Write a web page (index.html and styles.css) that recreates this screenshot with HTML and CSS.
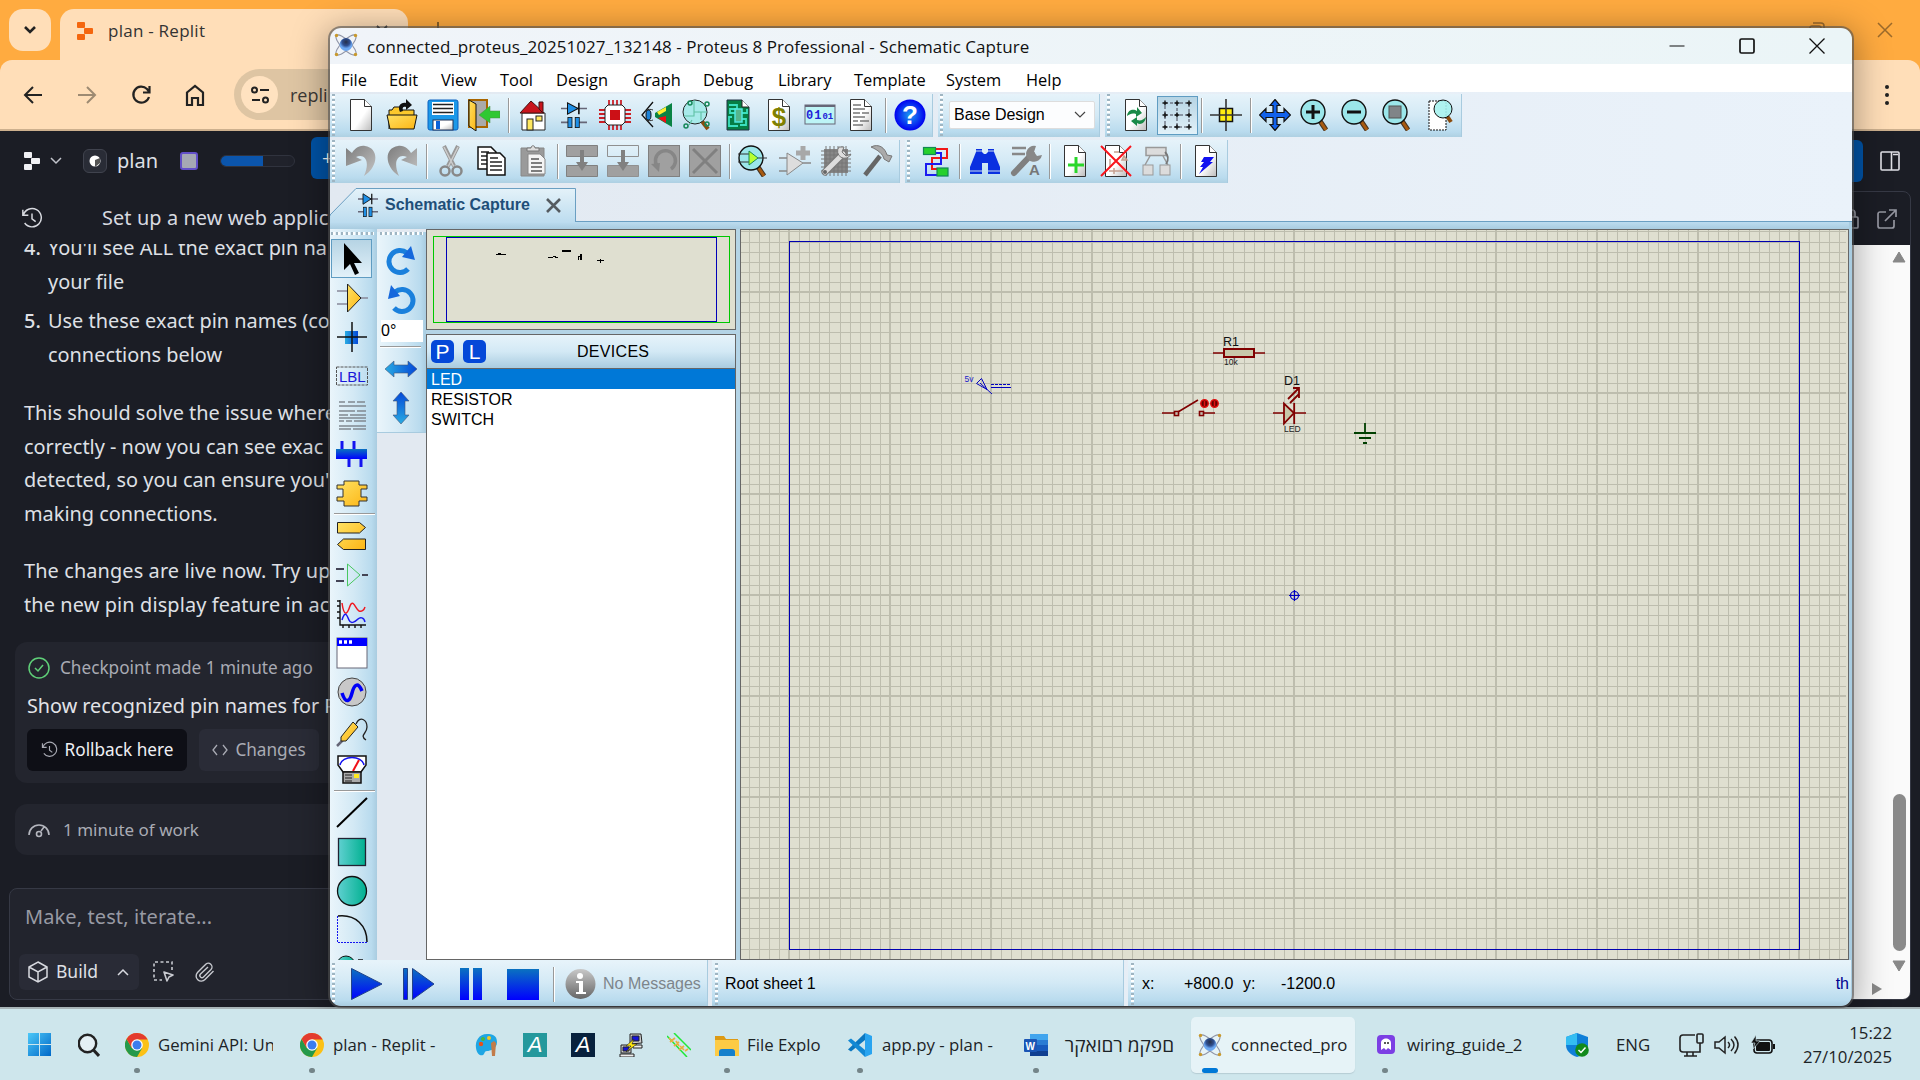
FILE: index.html
```html
<!DOCTYPE html>
<html lang="en">
<head>
<meta charset="utf-8">
<title>Schematic Capture</title>
<link rel="stylesheet" href="styles.css">
</head>
<body>
<svg class="defs" aria-hidden="true">
  <defs>
    <linearGradient id="gBlueV" x1="0" y1="0" x2="0" y2="1"><stop offset="0" stop-color="#0a72c0"/><stop offset="1" stop-color="#00f"/></linearGradient>
    <linearGradient id="gBlueH"><stop offset="0" stop-color="#29abe2"/><stop offset="1" stop-color="#0448d8"/></linearGradient>
    <linearGradient id="gTeal"><stop offset="0" stop-color="#5fd0d0"/><stop offset="1" stop-color="#00b090"/></linearGradient>
    <linearGradient id="gGold" x1="0" y1="0" x2="1" y2="1"><stop offset="0" stop-color="#ffe263"/><stop offset="1" stop-color="#fcb514"/></linearGradient>
    <linearGradient id="gGrey" x1="0" y1="0" x2="1" y2="1"><stop offset="0" stop-color="#7c7c7c"/><stop offset="1" stop-color="#c4c4c4"/></linearGradient>
    <linearGradient id="gPage" x1="0" y1="0" x2="1" y2="1"><stop offset=".55" stop-color="#fff"/><stop offset="1" stop-color="#bbb"/></linearGradient>
    <linearGradient id="gInfo" x1="0" y1="0" x2="0" y2="1"><stop offset="0" stop-color="#c8c8c8"/><stop offset="1" stop-color="#666"/></linearGradient>
    <radialGradient id="gHelp"><stop offset="0" stop-color="#1c9cf0"/><stop offset="1" stop-color="#0000f0"/></radialGradient>
    <linearGradient id="gWin" x1="0" y1="0" x2="1" y2="1"><stop offset="0" stop-color="#4cc8f8"/><stop offset="1" stop-color="#0068c8"/></linearGradient>
    <radialGradient id="gBall" cx=".5" cy=".3"><stop offset="0" stop-color="#26304a"/><stop offset=".6" stop-color="#2f4f90"/><stop offset="1" stop-color="#6ba6f0"/></radialGradient>
    <symbol id="page" viewBox="0 0 32 32"><path d="M5.500 .5h14l7 7v24h-21z" fill="url(#gPage)" stroke="#333"/><path d="M19.500 .5v7h7" fill="#fff" stroke="#333"/></symbol>
    <symbol id="lens" viewBox="0 0 32 32"><path d="M20 22l6 9" stroke="#432" stroke-width="5"/><path d="M20 22l6 9" stroke="#a85a10" stroke-width="3"/><circle cx="13" cy="13" r="12" fill="#9be6ea" stroke="#111" stroke-width="1.400"/></symbol>
    <symbol id="parts" viewBox="0 0 32 32"><path d="M0 8h32M0 25h11M21 25h11" stroke="#667" stroke-width="2"/><path d="M8 1v14l13-7z" fill="#1e8fe6" stroke="#111" stroke-width="1.300"/><path d="M22 1v14" stroke="#111" stroke-width="2"/><rect x="8.500" y="19" width="5" height="12.500" fill="#1e8fe6" stroke="#111"/><rect x="17.500" y="19" width="5" height="12.500" fill="#1e8fe6" stroke="#111"/></symbol>
    <symbol id="atom" viewBox="0 0 24 24"><g fill="none" stroke="#8f94a6" stroke-width="1.100"><ellipse cx="12" cy="12" rx="13.500" ry="4.500" transform="rotate(45 12 12)"/><ellipse cx="12" cy="12" rx="13.500" ry="4.500" transform="rotate(-45 12 12)"/></g><circle cx="12" cy="11.500" r="6.400" fill="url(#gBall)"/><g fill="#c9992c"><circle cx="2.500" cy="2.500" r="1.700"/><circle cx="21.500" cy="2.500" r="1.700"/><circle cx="2.500" cy="21.500" r="1.700"/><circle cx="21.500" cy="21.500" r="1.700"/></g></symbol>
    <symbol id="chrome" viewBox="0 0 24 24"><circle cx="12" cy="12" r="12" fill="#fbc116"/><path d="M12 24l5.200-9H6.800L1.600 6A12 12 0 0 0 12 24" fill="#24994a"/><path d="M12 6.500h10.600A12 12 0 0 0 1.600 6l5.200 9z" fill="#e33b2e"/><circle cx="12" cy="12" r="5.800" fill="#fff"/><circle cx="12" cy="12" r="4.500" fill="#3b7ded"/></symbol>
    <symbol id="doc" viewBox="0 0 32 32"><path d="M1 1h13l5 5v17H1z" fill="#fff" stroke="#111" stroke-width="1.500"/><path d="M4 6h8M4 10h12M4 14h12M4 18h12" stroke="#222" stroke-width="1.700"/></symbol>
    <symbol id="history" viewBox="0 0 24 24"><path d="M2 3v6h6M2.500 9A10 10 0 1 1 4 17.500M12 7v6l4 3" fill="none" stroke="currentColor" stroke-width="1.600"/></symbol>
    <linearGradient id="tabFill" x1="0" y1="0" x2="0" y2="1"><stop offset="0" stop-color="#e4f2f9"/><stop offset="1" stop-color="#bcdcef"/></linearGradient>
  </defs>
</svg>

<div class="desktop">

  <!-- Browser window -->
  <section class="browser">
    <div class="tabstrip">
      <div class="tabsearch"><svg width="14" height="10"><path d="M2 2l5 5 5-5" fill="none" stroke="#222" stroke-width="2.600"/></svg></div>
      <div class="tab">
        <svg width="16" height="20" viewBox="0 0 16 20"><g fill="#f4660e"><rect x="0" y="1" width="8" height="6" rx="1"/><rect x="7" y="7" width="9" height="6" rx="1"/><rect x="0" y="13" width="8" height="6" rx="1"/></g></svg>
        <span class="tabtitle">plan - Replit</span>
        <svg class="tabclose" width="12" height="12"><path d="M1 1l10 10M11 1L1 11" stroke="#222" stroke-width="1.800"/></svg>
      </div>
      <svg class="plus" width="14" height="14"><path d="M7 0v14M0 7h14" stroke="#8a6128" stroke-width="2"/></svg>
      <div class="sysbuttons">
        <svg width="16" height="16" fill="none" stroke="#9b6a2b" stroke-width="1.500"><rect x="1" y="4" width="11" height="11" rx="2"/><path d="M4 1h8a3 3 0 0 1 3 3v8"/></svg>
        <svg width="16" height="16"><path d="M1 1l14 14M15 1L1 15" stroke="#9b6a2b" stroke-width="1.500"/></svg>
      </div>
    </div>
    <div class="navbar">
      <svg width="20" height="20" viewBox="0 0 20 20" fill="none" stroke="#222" stroke-width="2"><path d="M19 10H2M10 2l-8 8 8 8"/></svg>
      <svg width="20" height="20" viewBox="0 0 20 20" fill="none" stroke="#9d8a72" stroke-width="2"><path d="M1 10h17M10 2l8 8-8 8"/></svg>
      <svg width="20" height="20" viewBox="0 0 20 20" fill="none" stroke="#222" stroke-width="2.200"><path d="M18 12a8 8 0 1 1-2-8l2 2.500M18.500 1v6.500H12"/></svg>
      <svg width="20" height="22" viewBox="0 0 20 22" fill="none" stroke="#222" stroke-width="2.200"><path d="M2 8.500L10 2l8 6.500V21h-5v-7H7v7H2z"/></svg>
      <div class="omnibox">
        <div class="site"><svg width="18" height="18" viewBox="0 0 18 18" fill="none" stroke="#222" stroke-width="2"><circle cx="3.500" cy="4" r="2.500"/><path d="M9 4h9M1 14h8"/><circle cx="14.500" cy="14" r="2.500"/></svg></div>
        <span>repli</span>
      </div>
      <div class="dots"><i></i><i></i><i></i></div>
    </div>
    <div class="page">
      <div class="chat">
        <div class="apphead">
          <svg width="16" height="18" viewBox="0 0 16 18" fill="#f0f0f4"><rect width="8" height="6" rx="1"/><rect x="7" y="6" width="9" height="6" rx="1"/><rect y="12" width="8" height="6" rx="1"/></svg>
          <svg class="chev" width="12" height="8"><path d="M1 1l5 5 5-5" fill="none" stroke="#c2c4cc" stroke-width="1.500"/></svg>
          <span class="appbox"><svg width="12" height="12"><circle cx="6" cy="6" r="5.500" fill="#fff"/><path d="M6 5l5-2v5l-5 4z" fill="#555"/></svg></span>
          <span class="appname">plan</span>
          <span class="purple"></span>
          <span class="progress"><i></i></span>
          <span class="newbtn">+</span>
        </div>
        <div class="thread"><svg width="22" height="22"><use href="#history"/></svg><span>Set up a new web applic</span></div>
        <div class="msgs">
          <div class="li first"><b>4.</b><span>You'll see ALL the exact pin na</span></div>
          <div class="li"><b></b><span>your file</span></div>
          <div class="li gap"><b>5.</b><span>Use these exact pin names (co</span></div>
          <div class="li"><b></b><span>connections below</span></div>
          <p>This should solve the issue where<br>correctly - now you can see exac<br>detected, so you can ensure you'<br>making connections.</p>
          <p>The changes are live now. Try up<br>the new pin display feature in act</p>
        </div>
        <div class="card">
          <div class="ck"><svg width="22" height="22" fill="none" stroke="#5fcf78" stroke-width="1.500"><circle cx="11" cy="11" r="10"/><path d="M7 11l3 3 5-6"/></svg><span>Checkpoint made 1 minute ago</span></div>
          <div class="show">Show recognized pin names for P</div>
          <div class="btns">
            <span class="btn dark"><svg width="17" height="17"><use href="#history"/></svg>Rollback here</span>
            <span class="btn"><svg width="16" height="12" fill="none" stroke="currentColor" stroke-width="1.300"><path d="M5 1L1 6l4 5M11 1l4 5-4 5"/></svg>Changes</span>
          </div>
        </div>
        <div class="work"><svg width="22" height="16" fill="none" stroke="#b4b6be" stroke-width="1.600"><path d="M1 13A10 10 0 0 1 21 13M13 9l3-4"/><circle cx="11" cy="12" r="2.500"/></svg><span>1 minute of work</span></div>
        <div class="prompt">
          <div class="ph">Make, test, iterate...</div>
          <div class="tools">
            <span class="build"><svg width="20" height="22" viewBox="0 0 20 22" fill="none" stroke="#d8dae0" stroke-width="1.500"><path d="M10 1l9 5v10l-9 5-9-5V6zM1 6l9 5 9-5M10 11v10"/></svg><span>Build</span><svg width="12" height="8"><path d="M1 7l5-5 5 5" fill="none" stroke="#d8dae0" stroke-width="1.500"/></svg></span>
            <svg width="21" height="21" fill="none" stroke="#c8cad0" stroke-width="1.600"><path d="M19 9V1H1v18h8" stroke-dasharray="3 2.500"/><path d="M11 11l9 3-4 2-2 4z" stroke-linejoin="round"/></svg>
            <svg class="clip" width="20" height="20" viewBox="0 0 20 20" fill="none" stroke="#c8cad0" stroke-width="1.400"><path d="M18.500 9l-8.500 8.500a5 5 0 0 1-7.500-7L10.500 2.500a3.600 3.600 0 0 1 5.500 5L8.500 15a2 2 0 0 1-3-3L13 5"/></svg>
          </div>
        </div>
      </div>
      <div class="preview">
        <div class="pvtop"><span class="bluebtn"></span><svg width="20" height="20" fill="none" stroke="#e0e0e6" stroke-width="1.600"><rect x="1" y="1" width="18" height="18" rx="1"/><path d="M11.500 1v18M13 3.500h5"/></svg></div>
        <div class="frame">
          <div class="fhead">
            <svg width="20" height="20" fill="none" stroke="#9496a0" stroke-width="1.700"><rect x="4" y="8" width="15" height="11" rx="1"/><path d="M10 8V4a3 3 0 0 1 6 0v4"/></svg>
            <svg width="20" height="20" fill="none" stroke="#9496a0" stroke-width="1.700"><path d="M9 3H3a2 2 0 0 0-2 2v12a2 2 0 0 0 2 2h12a2 2 0 0 0 2-2v-6M12 1h7v7M19 1L8 12"/></svg>
          </div>
          <div class="fbody">
            <div class="vscroll"><svg width="16" height="12"><path d="M8 1l6 10H2z" fill="#888" stroke="#888" stroke-linejoin="round"/></svg><i></i><svg width="16" height="12"><path d="M8 11l6-10H2z" fill="#888" stroke="#888" stroke-linejoin="round"/></svg></div>
            <div class="hscroll"><svg width="12" height="14"><path d="M1 1l10 6-10 6z" fill="#888"/></svg></div>
          </div>
        </div>
      </div>
    </div>
  </section>

  <!-- Proteus window -->
  <section class="proteus">
    <header class="title">
      <svg width="24" height="24"><use href="#atom"/></svg>
      <span>connected_proteus_20251027_132148 - Proteus 8 Professional - Schematic Capture</span>
      <div class="wbtns">
        <svg width="16" height="16"><path d="M.5 8h15" stroke="#111" stroke-width="1.200"/></svg>
        <svg width="16" height="16"><rect x="1" y="1" width="14" height="14" rx="1.500" fill="none" stroke="#111" stroke-width="1.700"/></svg>
        <svg width="16" height="16"><path d="M.5 .5l15 15M15.500 .5l-15 15" stroke="#111" stroke-width="1.300"/></svg>
      </div>
    </header>
    <nav class="menu"><span>File</span><span>Edit</span><span>View</span><span>Tool</span><span>Design</span><span>Graph</span><span>Debug</span><span>Library</span><span>Template</span><span>System</span><span>Help</span></nav>

    <div class="toolrow">
      <div class="bar">
        <i class="grip"></i>
        <span class="c"><svg><use href="#page"/></svg></span>
        <span class="c"><svg viewBox="0 0 32 32"><path d="M3 30V11h3l2-3h7l1 3h12v5" fill="#fcc92c" stroke="#111"/><path d="M1 16h30l-3 14H4z" fill="url(#gGold)" stroke="#111"/><path d="M14 13c-3-6 1-10 6-9V0l6 6-6 5V8c-3-1-4 1-3 4z" fill="#111"/></svg></span>
        <span class="c"><svg viewBox="0 0 32 32"><rect x="1" y="1" width="30" height="30" rx="2" fill="#1b98e8" stroke="#0a60c0"/><rect x="5" y="3" width="22" height="13" fill="#fff"/><path d="M6 5.500h20M6 9.500h20M6 13.500h20" stroke="#222" stroke-width="1.500"/><rect x="6" y="21" width="20" height="10" fill="url(#gPage)" stroke="#235"/><rect x="9" y="22" width="4" height="8" fill="#0b62d8"/></svg></span>
        <span class="c"><svg viewBox="0 0 32 32"><path d="M1 1h18v27H1z" fill="#aaa" stroke="#a86500" stroke-width="2"/><path d="M1 1l7 4v27l-7-5z" fill="url(#gGold)" stroke="#111"/><path d="M11 16l11-9v5h10v7H22v5z" fill="#2fc832" stroke="#4a8a40" stroke-width=".5"/></svg></span>
        <i class="sep"></i>
        <span class="c"><svg viewBox="0 0 32 32"><path d="M5 14h23v17H5z" fill="#fff" stroke="#222"/><path d="M3 14L14 2l13 12z" fill="#c8141c" stroke="#411"/><path d="M22 3h4v11l-4-4z" fill="#c8141c" stroke="#411"/><rect x="10" y="20" width="6" height="11" fill="#ffe860" stroke="#222"/><rect x="19" y="17" width="6" height="5" fill="#ffe860" stroke="#222"/></svg></span>
        <span class="c"><svg viewBox="0 0 32 32"><use href="#parts" x="3" width="26" height="32" /></svg></span>
        <span class="c"><svg viewBox="0 0 32 32"><path d="M10 1v30M14 1v30M18 1v30M22 1v30M0 11h32M0 15h32M0 19h32M0 23h32" stroke="#cc2026" stroke-width="1.800"/><path d="M9 6h14l3 3v14l-3 3H9l-3-3V9z" fill="#fff" stroke="#222"/><rect x="11" y="11" width="10" height="10" fill="#cc1016"/></svg></span>
        <span class="c"><svg viewBox="0 0 32 32"><path d="M13 3L2 16l11 12" fill="none" stroke="#111" stroke-width="1.300"/><path d="M5 12c3-2 6-2 8-1M5 20c3 2 6 2 8 1" fill="none" stroke="#333"/><ellipse cx="8.500" cy="16" rx="2.500" ry="5" fill="#1c82d8" stroke="#111"/><path d="M32 4v24L15 18v-4z" fill="#0a8344"/><path d="M17 13l9-5v4l-7 4z" fill="#ffee30"/><path d="M18 19l8-2v7z" fill="#f00c14"/></svg></span>
        <span class="c"><svg viewBox="0 0 32 32"><path d="M20 21l7 9" stroke="#8a4b0c" stroke-width="4"/><circle cx="14" cy="13" r="12" fill="#a8eaea" stroke="#222"/><path d="M13 1v12h13M3 17h10v-4M20 13v8M8 26l3-5" fill="none" stroke="#5fc0a4" stroke-width="1.100"/><g fill="none" stroke="#168858" stroke-width="1.500"><circle cx="9" cy="4" r="2"/><circle cx="26" cy="5" r="2"/><circle cx="26" cy="25" r="2"/><circle cx="5" cy="27" r="2"/></g></svg></span>
        <span class="c"><svg viewBox="0 0 32 32"><path d="M5 1h15l7 7v23H5z" fill="#067e44" stroke="#234"/><path d="M20 1v7h7" fill="#fff" stroke="#222"/><path d="M7 6h8v4H8v4h5M20 14h5v-4M10 18H7v9h9M19 20h5v6h-6" fill="none" stroke="#3ce0c0" stroke-width="1.800"/><rect x="13" y="10" width="7" height="13" fill="#56b58c" stroke="#50e8e0" stroke-width="1.500"/></svg></span>
        <span class="c"><svg viewBox="0 0 32 32"><use href="#page"/><text x="16" y="27" class="dollar">$</text></svg></span>
        <span class="c"><svg viewBox="0 0 32 32"><rect x="1" y="6" width="30" height="19" fill="#bdf4f6" stroke="#667"/><path d="M1 7h30" stroke="#667" stroke-width="2"/><text x="2" y="20" class="bin">01<tspan class="small">01</tspan></text></svg></span>
        <span class="c"><svg viewBox="0 0 32 32"><use href="#page"/><path d="M8 6h8M8 10h12M8 14h7M17 14h7M8 18h12M8 22h5M15 22h9M8 26h10" stroke="#777" stroke-width="1.300"/></svg></span>
        <i class="sep"></i>
        <span class="c"><svg viewBox="0 0 32 32"><circle cx="16" cy="16" r="15.500" fill="url(#gHelp)"/><text x="16" y="25" class="q">?</text></svg></span>
      </div>
      <div class="bar">
        <i class="grip"></i>
        <div class="combo"><span>Base Design</span><svg width="12" height="8"><path d="M1 1l5 5 5-5" fill="none" stroke="#444" stroke-width="1.200"/></svg></div>
      </div>
      <div class="bar">
        <i class="grip"></i>
        <span class="c"><svg viewBox="0 0 32 32"><use href="#page"/><path d="M7 17c1-7 7-7 10-5V8l5 6-6 4v-3c-4-1-6 0-9 2zM26 18c-1 7-6 8-9 6v3l-6-5 6-4v3c4 1 6 0 9-3z" fill="#1a8a48"/></svg></span>
        <span class="c on"><svg viewBox="0 0 32 32"><path d="M4 4h24v24H4zM16 4v24M4 16h24" fill="none" stroke="#445" stroke-width="1" stroke-dasharray="3 2"/><path d="M1.500 4h5M4 1.500v5M13.500 4h5M16 1.500v5M25.500 4h5M28 1.500v5M1.500 16h5M4 13.500v5M13.500 16h5M16 13.500v5M25.500 16h5M28 13.500v5M1.500 28h5M4 25.500v5M13.500 28h5M16 25.500v5M25.500 28h5M28 25.500v5" stroke="#111" stroke-width="1.400"/></svg></span>
        <i class="sep"></i>
        <span class="c"><svg viewBox="0 0 32 32"><rect x="9.500" y="9.500" width="13" height="13" fill="#ffee10" stroke="#111" stroke-width="1.500"/><path d="M16 0v32M0 16h32" stroke="#333" stroke-width="1.600"/></svg></span>
        <i class="sep"></i>
        <span class="c"><svg viewBox="0 0 32 32"><path d="M16 .5l5 6h-3v7h7v-4l6.500 6.500-6.500 6.500v-4h-7v7h3l-5 6-5-6h3v-7H7v4L.5 16 7 9.500v4h7v-7h-3z" fill="#1262ec" stroke="#111" stroke-width="1.200"/></svg></span>
        <span class="c"><svg viewBox="0 0 32 32"><use href="#lens"/><path d="M13 6v14M6 13h14" stroke="#111" stroke-width="3"/></svg></span>
        <span class="c"><svg viewBox="0 0 32 32"><use href="#lens"/><path d="M6 13h14" stroke="#111" stroke-width="3"/></svg></span>
        <span class="c"><svg viewBox="0 0 32 32"><use href="#lens"/><rect x="7" y="7" width="12" height="12" fill="#808488" stroke="#555"/></svg></span>
        <span class="c"><svg viewBox="0 0 32 32"><rect x="6" y="2" width="17" height="29" fill="#fff" stroke="#111" stroke-dasharray="2 1"/><path d="M24 17l4 6" stroke="#8a4b0c" stroke-width="4"/><circle cx="20" cy="10" r="9" fill="#a6f2ee" fill-opacity=".9" stroke="#111"/></svg></span>
      </div>
    </div>

    <div class="toolrow">
      <div class="bar">
        <i class="grip"></i>
        <span class="c"><svg viewBox="0 0 32 32"><path d="M1 3v18l16-6-6-3c8-4 15 3 8 19 15-10 15-28 1-30-7-1-11 4-13 7z" fill="url(#gGrey)"/></svg></span>
        <span class="c"><svg viewBox="0 0 32 32"><path d="M31 3v18l-16-6 6-3c-8-4-15 3-8 19C-2 21-2 3 12 1c7-1 11 4 13 7z" fill="url(#gGrey)"/></svg></span>
        <i class="sep"></i>
        <span class="c"><svg viewBox="0 0 32 32"><path d="M9 1l10 20M23 1L13 21" stroke="#999" stroke-width="4"/><path d="M9 2l10 20M23 2L13 22" stroke="#ccc" stroke-width="1.500"/><g fill="none" stroke="#888" stroke-width="2.500"><circle cx="10" cy="26" r="4.500"/><circle cx="22" cy="26" r="4.500"/></g></svg></span>
        <span class="c"><svg viewBox="0 0 32 32"><use href="#doc" x="1" y="1"/><use href="#doc" x="10" y="7"/></svg></span>
        <span class="c"><svg viewBox="0 0 32 32"><path d="M4 3h23v28H4z" fill="#9a9a9a" stroke="#888"/><path d="M10 6V3h4c0-3 4-3 4 0h4v3z" fill="#ddd" stroke="#777"/><path d="M11 9h12l5 5v15H11z" fill="#f4f4f4" stroke="#888"/><path d="M14 14h8M14 18h11M14 22h11M14 26h11" stroke="#555" stroke-width="1.500"/></svg></span>
        <i class="sep"></i>
        <span class="c"><svg viewBox="0 0 32 32"><g fill="#a0a0a0" stroke="#808080"><path d="M.5 .5h31v11H.5zM.5 20.500h31v11H.5z"/></g><path d="M16 5v15" stroke="#808080" stroke-width="4"/><path d="M10 17h12l-6 9z" fill="#808080"/></svg></span>
        <span class="c"><svg viewBox="0 0 32 32"><g stroke="#909090"><path d="M.5 .5h31v11H.5z" fill="none"/><path d="M.5 20.500h31v11H.5z" fill="#a0a0a0"/></g><path d="M16 5v15" stroke="#808080" stroke-width="4"/><path d="M10 17h12l-6 9z" fill="#808080"/></svg></span>
        <span class="c"><svg viewBox="0 0 32 32"><rect x=".5" y=".5" width="31" height="31" fill="#a0a0a0" stroke="#808080"/><path d="M9 21a10 10 0 1 1 14 3" fill="none" stroke="#868686" stroke-width="3.500"/><path d="M3 19l9-1-1 9z" fill="#868686"/></svg></span>
        <span class="c"><svg viewBox="0 0 32 32"><rect x=".5" y=".5" width="31" height="31" fill="#a0a0a0" stroke="#808080"/><path d="M4 4l24 24M28 4L4 28" stroke="#808080" stroke-width="3"/></svg></span>
        <i class="sep"></i>
        <span class="c"><svg viewBox="0 0 32 32"><use href="#lens"/><path d="M0 9h11M0 17h11M20 13h9" stroke="#333" stroke-width="1.200"/><path d="M11 6v14l9-7z" fill="#b8ff30" stroke="#1b8a50"/></svg></span>
        <span class="c"><svg viewBox="0 0 32 32"><path d="M0 13h8M0 26h8M24 18h8" stroke="#888" stroke-width="1.500"/><path d="M8 8v22l16-12z" fill="#ddd" stroke="#888"/><path d="M24 1v14M17 8h14" stroke="#a8a8a8" stroke-width="5"/></svg></span>
        <span class="c"><svg viewBox="0 0 32 32"><rect x="4" y="4" width="24" height="24" fill="#888"/><path d="M6 1v30M10 1v30M14 1v30M18 1v30M22 1v30M26 1v30M1 6h30M1 10h30M1 14h30M1 18h30M1 22h30M1 26h30" stroke="#777"/><path d="M5 27L23 9" stroke="#777" stroke-width="7" stroke-linecap="round"/><path d="M5 27L23 9" stroke="#ddd" stroke-width="5" stroke-linecap="round"/><path d="M19 2a7 7 0 1 0 12 7l-5 2-4-4 2-5z" fill="#ddd" stroke="#777"/><circle cx="5" cy="27" r="2" fill="#666"/></svg></span>
        <span class="c"><svg viewBox="0 0 32 32"><path d="M4 30L19 11" stroke="#666" stroke-width="4.500"/><path d="M10 2c8-4 14 1 16 8l5 1-3 6-5-3c-1-5-6-9-13-12z" fill="#aaa" stroke="#777"/></svg></span>
      </div>
      <div class="bar">
        <i class="grip"></i>
        <span class="c"><svg viewBox="0 0 32 32" fill="none" stroke-width="2"><path d="M16 4h11v9H12v11h6" stroke="#f01818"/><path d="M14 8h7v11H6v11h15" stroke="#1c1cf0"/><rect x="3.500" y="2.500" width="12" height="7" fill="#26d02c" stroke="#185" stroke-width="1.200"/><rect x="17" y="23" width="11" height="8" fill="#26d02c" stroke="#185" stroke-width="1.200"/></svg></span>
        <i class="sep"></i>
        <span class="c"><svg viewBox="0 0 32 32"><path d="M7 4h6v3l2 2h2l2-2V4h6v3l6 15v7H19V18h-6v11H1v-7L7 7z" fill="#0a30e0"/><path d="M1 26h12M19 26h12M7 6h6M19 6h6" stroke="#cde" stroke-width="1.200"/></svg></span>
        <span class="c"><svg viewBox="0 0 32 32"><path d="M2 3h14M2 9h13" stroke="#888" stroke-width="2.500"/><path d="M4 28L22 9" stroke="#808080" stroke-width="6" stroke-linecap="round"/><path d="M26 1a8 8 0 1 0 6 9l-5 1-3-4z" fill="#888"/><text x="19" y="30" class="ga">A</text></svg></span>
        <i class="sep"></i>
        <span class="c"><svg viewBox="0 0 32 32"><use href="#page"/><path d="M17 12v16M9 20h16" stroke="#2ad62a" stroke-width="3"/></svg></span>
        <span class="c"><svg viewBox="0 0 32 32"><use href="#page"/><path d="M14 7h5M10 14v8M22 15h5l-3-4zM9 26h14M14 23v6" stroke="#c6a090" stroke-width="1.500" fill="#c8d8c8"/><path d="M1 1l30 30M31 1L1 31" stroke="#f8141c" stroke-width="2"/></svg></span>
        <span class="c"><svg viewBox="0 0 32 32" fill="#dcdcdc" stroke="#999"><path d="M5 2.500h20v8H5zM9 11l-5 9M22 11l5 9" stroke-width="1.500"/><rect x="2" y="20" width="10" height="10"/><rect x="19" y="20" width="10" height="10"/><path d="M24 7c5 5 3 9 1 12" fill="none" stroke="#777" stroke-width="1.800"/></svg></span>
        <i class="sep"></i>
        <span class="c"><svg viewBox="0 0 32 32"><use href="#page"/><path d="M14 12h10l-4 5h3L9 29l4-7h-3l4-5h-3z" fill="#1010f0"/></svg></span>
      </div>
    </div>

    <div class="doctabs">
      <div class="doctab">
        <svg class="slant" width="247" height="35" viewBox="0 0 247 35"><path d="M0 27L26 .5h219.500V35H0z" fill="url(#tabFill)" stroke="#6b9fc2"/><path d="M0 28v7h247" stroke="#bcdcef" stroke-width="2" fill="none"/></svg>
        <svg class="ticon" width="20" height="24" viewBox="0 0 32 32" preserveAspectRatio="none"><use href="#parts"/></svg>
        <b>Schematic Capture</b>
        <svg width="15" height="15"><path d="M1 1l13 13M14 1L1 14" stroke="#555b60" stroke-width="2.600"/></svg>
      </div>
    </div>

    <div class="work-area">
      <div class="side">
        <i class="hgrip"></i>
        <span class="s on"><svg viewBox="0 0 32 32"><path d="M8 0v27l6-6 5 11 4-2-5-10h8z" fill="#000"/></svg></span>
        <span class="s"><svg viewBox="0 0 32 32"><path d="M1 9h10M1 22h10M25 16h7" stroke="#889" stroke-width="1.500"/><path d="M11.500 2v28L25 16z" fill="url(#gGold)" stroke="#222"/></svg></span>
        <span class="s"><svg viewBox="0 0 32 32"><rect x="9" y="10" width="13" height="13" fill="url(#gBlueH)"/><path d="M16 1v30M1 16h30" stroke="#111" stroke-width="1.500"/></svg></span>
        <span class="s"><svg viewBox="0 0 32 32"><rect x=".5" y="7" width="31" height="18" fill="none" stroke="#555" stroke-dasharray="3 1"/><text x="3" y="22" class="lbl">LBL</text></svg></span>
        <span class="s"><svg viewBox="0 0 32 32"><path d="M3 3h6M12 3h7M21 3h8M3 7h27M3 12h16M21 12h9M3 16h9M14 16h16M3 19h27M3 22h5M10 22h6M18 22h12M3 27h27M3 30h12M17 30h13" stroke="#808890" stroke-width="1.300"/></svg></span>
        <span class="s"><svg viewBox="0 0 32 32"><path d="M6 3v10M18 3v10M13 20v9M25 20v9" stroke="#1414f0" stroke-width="3"/><rect x="0" y="11" width="31" height="10" fill="url(#gBlueV)"/></svg></span>
        <span class="s"><svg viewBox="0 0 32 32"><path d="M8 4h15v4h8v4h-6v8h6v4h-8v5H8v-5H1v-4h6v-8H1V8h7z" fill="url(#gGold)" stroke="#333"/></svg></span>
        <i class="hsep"></i>
        <span class="s"><svg viewBox="0 0 32 32"><path d="M1.500 2.500h22l6 5-6 5.500h-22zM29.500 19h-22l-6 5.500 6 5h22z" fill="url(#gGold)" stroke="#222"/></svg></span>
        <span class="s"><svg viewBox="0 0 32 32"><path d="M0 10h8M0 22h8M26 16h6" stroke="#445" stroke-width="1.800"/><path d="M11.500 5v22L24 16z" fill="none" stroke="#48c860"/></svg></span>
        <span class="s"><svg viewBox="0 0 32 32" fill="none"><path d="M4 2v25h26M1 3h3M1 8h3M1 14h3M1 20h3M7 27v3M13 27v3M19 27v3M25 27v3" stroke="#111" stroke-width="1.400"/><path d="M6 5c2 14 5 12 8 3 3-8 6 4 9 5s5-1 6-4" stroke="#f01820" stroke-width="1.500"/><path d="M6 22c3-10 5-5 7 0s7 1 9-1 6-2 7 3" stroke="#1818f0" stroke-width="1.500"/></svg></span>
        <span class="s"><svg viewBox="0 0 32 32"><rect x="1" y="1" width="30" height="30" fill="#fff" stroke="#667"/><rect x="1" y="1" width="30" height="8" fill="#00f"/><path d="M3 5h3M8 5h3M13 5h3" stroke="#fff" stroke-width="3.500"/></svg></span>
        <span class="s"><svg viewBox="0 0 32 32"><circle cx="16" cy="16" r="14" fill="#c8c8c8" stroke="#444"/><path d="M6 17c4 12 8 8 10 0s6-12 10-2" fill="none" stroke="#0000f8" stroke-width="3.500"/></svg></span>
        <span class="s"><svg viewBox="0 0 32 32"><path d="M1 31l6-6" stroke="#667" stroke-width="2.500"/><path d="M5 22L17 7l5 5L10 26H5z" fill="url(#gGold)" stroke="#222"/><path d="M20 9c4-9 11-4 11 3s-8 8-1 13" fill="none" stroke="#222" stroke-width="1.300"/></svg></span>
        <span class="s"><svg viewBox="0 0 32 32"><path d="M2 2h28v9l-5 7H7l-5-7z" fill="#fff" stroke="#111" stroke-width="1.500"/><path d="M4 11C6 1 26 1 28 11" fill="none" stroke="#1010f0" stroke-width="1.500"/><path d="M17 17l6-11" stroke="#f01018" stroke-width="2"/><rect x="7" y="18" width="18" height="11" fill="#aaa" stroke="#111" stroke-width="1.500"/><rect x="18" y="20" width="5" height="4" fill="#ffe820"/><path d="M9 21h7M9 24h7M9 27h7" stroke="#222"/></svg></span>
        <i class="hsep two"></i>
        <span class="s"><svg viewBox="0 0 32 32"><path d="M1 30L31 1" stroke="#000" stroke-width="2"/></svg></span>
        <span class="s"><svg viewBox="0 0 32 32"><rect x="2.500" y="2.500" width="27" height="27" fill="url(#gTeal)" stroke="#223" stroke-width="1.300"/></svg></span>
        <span class="s"><svg viewBox="0 0 32 32"><circle cx="16" cy="16" r="14.500" fill="url(#gTeal)" stroke="#111" stroke-width="1.300"/></svg></span>
        <span class="s"><svg viewBox="0 0 32 32" fill="none"><path d="M1.500 2v26.500H31" stroke="#1414f0" stroke-dasharray="2 1"/><path d="M2 2c18-2 29 10 29 26" stroke="#111" stroke-width="1.500"/></svg></span>
        <span class="s"><svg viewBox="0 0 32 32"><circle cx="10" cy="12" r="9" fill="url(#gTeal)" stroke="#111"/><path d="M22 7h5" stroke="#111" stroke-width="1.500"/></svg></span>
      </div>
      <div class="side2">
        <div class="rot">
          <i class="hgrip"></i>
          <span class="s"><svg viewBox="0 0 32 32"><path d="M23 24A11 11 0 1 1 22 8" fill="none" stroke="#1a80dc" stroke-width="5"/><path d="M17 12L26 1l4 14z" fill="#1668dc"/></svg></span>
          <span class="s"><svg viewBox="0 0 32 32"><path d="M9 24A11 11 0 1 0 10 8" fill="none" stroke="#1a80dc" stroke-width="5"/><path d="M15 12L6 1 3 15z" fill="#1668dc"/></svg></span>
          <div class="deg">0°</div>
          <i class="hsep"></i>
          <span class="s"><svg viewBox="0 0 32 32"><path d="M0 16l9-8v4h14V8l9 8-9 8v-4H9v4z" fill="url(#gBlueH)" stroke="#457" stroke-width=".6"/></svg></span>
          <span class="s"><svg viewBox="0 0 32 32"><path d="M0 16l9-8v4h14V8l9 8-9 8v-4H9v4z" transform="rotate(-90 16 16)" fill="url(#gBlueH)" stroke="#457" stroke-width=".6"/></svg></span>
        </div>
      </div>
      <div class="panel">
        <svg class="overview" width="310" height="101" viewBox="0 0 310 101" shape-rendering="crispEdges">
          <rect x=".5" y=".5" width="309" height="100" fill="#dfdfd0" stroke="#666"/>
          <rect x="7.500" y="7.500" width="296" height="86" fill="none" stroke="#00c800"/>
          <rect x="20.500" y="8.500" width="270" height="84" fill="none" stroke="#0000b8"/>
          <path d="M70 25h10v1h-10zM72 24h3v1h-3zM122 28h5v1h-5zM127 27h3v1h-3zM129 28h3v1h-3zM136 21h9v2h-9zM152 27h3v1h-3zM152 27h1v4h-1zM154 25h2v6h-2zM171 31h7v1h-7zM174 30h1v4h-1z" fill="#000"/>
        </svg>
        <div class="devices">
          <div class="dhead"><span class="pl">P</span><span class="pl">L</span><span class="dt">DEVICES</span></div>
          <ul><li class="sel">LED</li><li>RESISTOR</li><li>SWITCH</li></ul>
        </div>
      </div>
      <svg class="sheet" viewBox="741 230 1107 729">
        <defs>
          <pattern id="grid" x="788" y="291" width="101" height="101" patternUnits="userSpaceOnUse">
            <path fill="#bdbdae" shape-rendering="crispEdges" d="M11 0h1v101h-1zM21 0h1v101h-1zM31 0h1v101h-1zM41 0h1v101h-1zM52 0h1v101h-1zM62 0h1v101h-1zM72 0h1v101h-1zM82 0h1v101h-1zM92 0h1v101h-1zM0 11h101v1H0zM0 21h101v1H0zM0 31h101v1H0zM0 41h101v1H0zM0 52h101v1H0zM0 62h101v1H0zM0 72h101v1H0zM0 82h101v1H0zM0 92h101v1H0zM0 0h2v101H0zM0 0h101v2H0z"/>
          </pattern>
        </defs>
        <rect x="741" y="230" width="1107" height="729" fill="#dfdfd0"/>
        <rect x="741" y="230" width="1105" height="729" fill="url(#grid)"/>
        <rect x="789.500" y="241.500" width="1010" height="708" fill="none" stroke="#0000b0" shape-rendering="crispEdges"/>
        <!-- 5v supply terminal -->
        <g stroke="#0000c0" fill="none"><path d="M991 384.500h20" stroke-dasharray="3 1"/><path d="M991 387.500h20M976.500 383.500l5-5 5.500 11zM980 383l12 11" /></g>
        <text x="964.500" y="382" class="t8 blue">5v</text>
        <!-- resistor R1 -->
        <g stroke="#800000" fill="#c8c8aa" stroke-width="2"><path d="M1213 353h11M1254 353h11" stroke-width="1.500"/><rect x="1224" y="349" width="30" height="8"/></g>
        <text x="1223" y="346" class="t12">R1</text><text x="1224" y="365" class="t8">10k</text>
        <!-- switch -->
        <g stroke="#800000" fill="none" stroke-width="1.600"><path d="M1162 413h13M1178 412l20-12M1203 413h12"/><rect x="1174.500" y="411.500" width="4" height="4"/><rect x="1199.500" y="411.500" width="4" height="4"/></g>
        <g fill="#600" stroke="#e01010" stroke-width="1.500"><circle cx="1204.500" cy="403.500" r="3.700"/><circle cx="1214.500" cy="403.500" r="3.700"/><path d="M1204.500 401v5M1214.500 401v5"/></g>
        <!-- LED D1 -->
        <g stroke="#800000" fill="#c8c8aa" stroke-width="1.800"><path d="M1273 413h11M1294 413h12" stroke-width="1.600"/><path d="M1284 403.500v20l10-10.500z"/><path d="M1294.200 403v21M1288 399l11-11M1290 403l9-9M1293 388h6v10" fill="none"/></g>
        <text x="1284" y="385" class="t12">D1</text><text x="1284" y="432" class="t8">LED</text>
        <!-- ground -->
        <path d="M1365 423v10M1354 433h22M1359 438h12M1363 443h4" stroke="#004000" stroke-width="1.800"/>
        <!-- origin -->
        <g stroke="#0000c0" fill="none" stroke-width="1.200"><circle cx="1294.500" cy="595.500" r="4"/><path d="M1289 595.500h11M1294.500 590v11"/></g>
      </svg>
    </div>

    <footer class="status">
      <div class="sbar sim">
        <i class="grip"></i>
        <svg class="play" width="32" height="32"><path d="M.5 .5v31L31 16z" fill="url(#gBlueV)" stroke="#248"/></svg>
        <svg class="step" width="32" height="32"><path d="M.5 .5h4v31h-4zM9.500 .5v31L31 16z" fill="url(#gBlueV)" stroke="#248"/></svg>
        <svg class="pause" width="22" height="32"><path d="M0 0h9v32H0zM13 0h9v32h-9z" fill="url(#gBlueV)"/></svg>
        <svg class="stop" width="32" height="32"><path d="M0 1h32v31H0z" fill="url(#gBlueV)"/></svg>
        <i class="sep"></i>
        <svg class="info" width="31" height="32"><circle cx="15.500" cy="16" r="15" fill="url(#gInfo)"/><circle cx="15" cy="8" r="3" fill="#fff"/><path d="M11 13h7v11h3v2H11v-2h3v-9h-3z" fill="#fff"/></svg>
        <span class="nomsg">No Messages</span>
      </div>
      <div class="sbar root"><i class="grip"></i><span>Root sheet 1</span></div>
      <div class="sbar coords"><i class="grip"></i><span class="cx">x:</span><span class="vx">+800.0</span><span class="cy">y:</span><span>-1200.0</span><span class="th">th</span></div>
    </footer>
  </section>

  <!-- Taskbar -->
  <footer class="taskbar">
    <span class="tk start"><svg width="24" height="24"><path d="M0 0h11v11H0zM12 0h11v11H12zM0 12h11v11H0zM12 12h11v11H12z" fill="url(#gWin)"/></svg></span>
    <span class="tk search"><svg width="22" height="24" fill="none" stroke="#222" stroke-width="2.400"><circle cx="9.500" cy="10.500" r="8.700" fill="#e4eff4"/><path d="M15.500 17l5.500 6" stroke-width="3"/></svg></span>
    <span class="tk app gem run"><svg width="24" height="24"><use href="#chrome"/></svg><span>Gemini API: Un</span></span>
    <span class="tk app plan run"><svg width="24" height="24"><use href="#chrome"/></svg><span>plan - Replit -</span></span>
    <span class="tk"><svg width="24" height="24"><path d="M12 1C4 1 0 8 1 15s5 8 7 7 1-4 4-4 10-2 10-9-5-8-10-8z" fill="#1fa6e4"/><circle cx="6" cy="11" r="2.200" fill="#e8501c"/><circle cx="8" cy="6" r="2" fill="#4cb83c"/><circle cx="14" cy="5" r="2" fill="#f8c820"/><path d="M19 8l2 2-1 13h-3l-1-13z" fill="#c27c4a"/></svg></span>
    <span class="tk"><b class="abox">A</b></span>
    <span class="tk"><b class="abox navy">A</b></span>
    <span class="tk"><svg width="24" height="24" stroke="#222"><path d="M11 1h11l1 9-12 1zM2 12h10v8H2z" fill="#ccc"/><path d="M13 3h7v5h-7zM4 14h6v4H4z" fill="#1414d8"/><path d="M1 21h14v3H1zM14 12h9v3h-9z" fill="#eee"/><path d="M15 6L7 13h5l-5 6 11-8h-5z" fill="#ffe810" stroke-width=".6"/></svg></span>
    <span class="tk"><svg width="24" height="24"><path d="M7 0l17 17M0 3l20 21" stroke="#20e838" stroke-width="1.500"/><path d="M2 5l4 4M3 9l5-4M9 8l3 5M7 13l5-4M13 13l4 4M12 17l5-4M18 18l3-2" stroke="#e8b040" stroke-width="1.700"/></svg></span>
    <span class="tk app fe run"><svg width="24" height="24"><path d="M0 3h9l2 3h12v17H0z" fill="#dd9a14"/><path d="M0 7h24v16H0z" fill="#fdcb45"/><path d="M4 23v-4a3 3 0 0 1 3-3h10a3 3 0 0 1 3 3v4z" fill="#1580cc"/></svg><span>File Explo</span></span>
    <span class="tk app vs run"><svg width="24" height="24"><path d="M17 0l7 3v18l-7 3z" fill="#28a4f0"/><path d="M17 0v7L3 18.500 0 16.500z" fill="#0b77c0"/><path d="M17 24v-7L3 5.500 0 7.500z" fill="#1288d4"/></svg><span>app.py - plan -</span></span>
    <span class="tk app wd run"><svg width="24" height="24"><path d="M6 1h18v6H6z" fill="#41a5ee"/><path d="M6 7h18v5H6z" fill="#2b7cd3"/><path d="M6 12h18v6H6z" fill="#185abd"/><path d="M6 18h18v5H6z" fill="#103f91"/><rect y="6" width="13" height="13" rx="1" fill="#1a55b5"/><text x="1.500" y="16.500" class="w">W</text></svg><span dir="rtl">םפקמ רםואקר</span></span>
    <span class="tk app pr run act"><svg width="24" height="24"><use href="#atom"/></svg><span>connected_pro</span></span>
    <span class="tk app wg run"><svg width="18" height="19"><rect width="18" height="19" rx="4" fill="#7c3fe4"/><path d="M4 15V8c0-6 10-6 10 0v7l-3-2-2 2-2-2z" fill="#fff"/><circle cx="8" cy="8" r="1" fill="#222"/><circle cx="11" cy="8" r="1" fill="#222"/></svg><span>wiring_guide_2</span></span>
    <div class="tray">
      <svg class="shield" width="24" height="24"><path d="M12 0l11 4v8c0 6-5 10-11 12C6 22 1 18 1 12V4z" fill="#0f7fd8"/><path d="M12 0v12H1V4z" fill="#34bdf2"/><circle cx="17" cy="17" r="6.800" fill="#128a1c"/><path d="M13.500 17l2.500 2.500 4.500-5" fill="none" stroke="#fff" stroke-width="1.500"/></svg>
      <span class="eng">ENG</span>
      <svg width="25" height="24" fill="none" stroke="#222" stroke-width="1.600"><path d="M16 2H4a3 3 0 0 0-3 3v11a3 3 0 0 0 3 3h17V10M8 19v4M14 19v4M5 23h13"/><rect x="18" y="1" width="6" height="9" rx="1"/></svg>
      <svg class="vol" width="25" height="20" fill="none" stroke="#222" stroke-width="1.500"><path d="M1 7v6h4l6 5V2L5 7zM14 7q3 3 0 6M17 4q6 6 0 12M20.500 1.500q7 8 0 17"/></svg>
      <svg class="bat" width="25" height="20"><rect x="3" y="5" width="18" height="13" rx="3" fill="none" stroke="#111" stroke-width="1.600"/><rect x="5" y="7" width="14" height="9" rx="1" fill="#111"/><path d="M22 9h2v5h-2z" fill="#111"/><path d="M5 0L0 8h4l-2 6 7-8H5z" fill="#111" stroke="#cfe6ec" stroke-width=".6"/></svg>
      <div class="clock"><span>15:22</span><span>27/10/2025</span></div>
    </div>
  </footer>
</div>
</body>
</html>
```

FILE: styles.css
```css
* { box-sizing: border-box; }
body { margin: 0; overflow: hidden; background: #1b1d25; font-family: "Liberation Sans", Arial, sans-serif; }
svg { display: block; flex: none; }
i { font-style: normal; }
.defs { position: absolute; width: 0; height: 0; }
.desktop { position: relative; width: 1920px; height: 1080px; overflow: hidden; display: flex; flex-direction: column; white-space: nowrap; }

/* ---------- browser ---------- */
.browser { width: 1920px; height: 1009px; display: flex; flex-direction: column; background: #1b1d25; border-bottom: 2px solid #a9b5b8; }
.tabstrip { height: 72px; flex: none; margin-bottom: -12px; display: flex; background: #ffab40; padding-left: 9px; }
.tabsearch { width: 42px; height: 42px; margin-top: 9px; border-radius: 14px; background: #ffdeb8; display: flex; align-items: center; justify-content: center; }
.tab { width: 348px; height: 51px; margin: 9px 0 0 9px; padding: 0 20px 8px 17px; border-radius: 14px 14px 0 0; background: #ffdeb8; display: flex; align-items: center; font: 17px "Open Sans", sans-serif; color: #333; }
.tabtitle { margin-left: 15px; letter-spacing: 0.25px; }
.tabclose { margin-left: auto; }
.plus { margin: 22px 0 0 23px; }
.sysbuttons { margin-left: auto; display: flex; gap: 52px; padding: 22px 27px 0 0; }
.navbar { height: 71px; flex: none; background: #ffdeb8; border-radius: 12px 12px 0 0; border-bottom: 2px solid #cdb08e; display: flex; align-items: center; padding: 0 31px 0 23px; }
.navbar > svg { margin-right: 34px; }
.omnibox { width: 1200px; height: 51px; margin-left: -5px; border-radius: 26px; background: #dec5a3; display: flex; align-items: center; padding-left: 7px; font: 18px "Open Sans", sans-serif; color: #3b3835; }
.site { width: 37px; height: 37px; border-radius: 50%; background: #ffe2c0; display: flex; align-items: center; justify-content: center; margin-right: 12px; }
.dots { margin-left: auto; display: flex; flex-direction: column; gap: 4px; }
.dots i { width: 4px; height: 4px; border-radius: 50%; background: #222; }
.page { flex: 1; min-height: 0; display: flex; justify-content: space-between; }

.chat { width: 560px; display: flex; flex-direction: column; color: #dfe0e5; font: 19.900px/33.500px "Noto Sans", sans-serif; }
.apphead { height: 60px; display: flex; align-items: center; padding-left: 24px; }
.chev { margin-left: 10px; }
.appbox { width: 24px; height: 24px; margin-left: 21px; border-radius: 6px; border: 1px solid #40434e; background: #292c36; display: flex; align-items: center; justify-content: center; }
.appname { width: 63px; margin-left: 10px; font-size: 20px; }
.purple { width: 18px; height: 18px; border: 2px solid #6350c8; background: #a5a8b4; border-radius: 3px; }
.progress { width: 75px; height: 12px; margin-left: 22px; border: 1px solid #30333e; border-radius: 6px; overflow: hidden; background: #20222b; display: flex; }
.progress i { width: 42px; background: #0b55ac; }
.newbtn { width: 160px; height: 42px; margin: -6px 0 0 16px; border-radius: 6px; background: #0053a6; color: #fff; padding: 4px 0 0 11px; }
.thread { height: 53px; padding: 0 0 0 21px; display: flex; align-items: center; color: #d8dae0; letter-spacing: .1px; }
.thread span { margin-left: 59px; }
.msgs { height: 398px; overflow: hidden; padding-left: 24px; }
.li { display: flex; height: 34px; }
.li b { width: 24px; font-weight: 500; }
.li.first { margin-top: -13px; }
.li.gap { margin-top: 5px; }
p { margin: 24px 0; }
.msgs p + p { margin-top: 24px; }
.msgs p:last-child { letter-spacing: .12px; }
.card { height: 141px; margin-left: 15px; padding: 9px 12px; border-radius: 12px; background: #23252e; font-size: 17.200px; color: #a9abb4; }
.ck { display: flex; align-items: center; gap: 10px; margin-left: 1px; }
.show { font-size: 19.800px; color: #e2e3e8; line-height: 42px; }
.btns { display: flex; gap: 12px; margin-top: 2px; }
.btn { width: 120px; height: 42px; border-radius: 6px; background: #2a2c37; display: flex; align-items: center; justify-content: center; gap: 7px; font-size: 17.200px; line-height: 34px; }
.btn.dark { width: 160px; background: #0e0f16; color: #f0f0f4; }
.btn.dark svg { color: #a9abb4; }
.work { height: 51px; margin: 21px 0 0 15px; padding-left: 13px; border-radius: 12px; background: #23252e; display: flex; align-items: center; gap: 13px; font-size: 17px; color: #a9abb4; }
.prompt { height: 112px; margin: 33px 0 0 9px; padding: 11px 0 0 9px; border: 1px solid #363945; border-radius: 8px; background: #22242d; }
.ph { padding-left: 6px; color: #989aa4; font-size: 20px; letter-spacing: .1px; }
.tools { display: flex; align-items: center; margin-top: 20px; }
.build { width: 120px; height: 36px; padding: 0 10px 0 9px; margin-right: 14px; border-radius: 6px; background: #292b36; display: flex; align-items: center; font-size: 17.500px; }
.build > span { width: 61px; margin-left: 8px; }
.clip { margin-left: 21px; }

.preview { width: 200px; padding-right: 9px; display: flex; flex-direction: column; }
.pvtop { height: 60px; display: flex; align-items: center; justify-content: space-between; padding-right: 11px; }
.bluebtn { width: 143px; height: 42px; border-radius: 6px; background: #0053a6; }
.frame { height: 809px; border: 1px solid #363945; border-radius: 8px; overflow: hidden; display: flex; flex-direction: column; }
.fhead { height: 53px; display: flex; align-items: center; justify-content: flex-end; gap: 18px; padding-right: 13px; }
.fbody { flex: 1; background: #fafafa; display: flex; flex-direction: column; }
.vscroll { flex: 1; width: 22px; align-self: flex-end; display: flex; flex-direction: column; align-items: center; padding: 6px 0 1px; }
.vscroll i { width: 13px; height: 157px; margin: auto 0 9px; border-radius: 7px; background: #8a8a8a; }
.hscroll { height: 26px; display: flex; justify-content: flex-end; padding: 9px 27px 0 0; }

/* ---------- Proteus ---------- */
.proteus { position: absolute; left: 330px; top: 28px; width: 1522px; height: 978px; border-radius: 11px; overflow: hidden; background: linear-gradient(90deg, #e2e9f1, #eaf2fa); display: flex; flex-direction: column; }
.desktop::after { content: ""; position: absolute; left: 330px; top: 28px; width: 1522px; height: 978px; border-radius: 11px; pointer-events: none; box-shadow: 0 0 0 2px rgba(80,80,80,.6), 0 6px 34px 4px rgba(0,0,0,.34); clip-path: inset(-60px -60px -3px -60px); }
.title { height: 36px; background: linear-gradient(90deg, #f0f4f9, #ebf5f7); display: flex; align-items: center; padding: 0 27px 0 4px; font: 17px "Open Sans", sans-serif; color: #111; }
.title > span { margin-left: 9px; letter-spacing: .05px; }
.title > svg { margin-top: -3px; }
.wbtns { margin-left: auto; display: flex; gap: 54px; }
.menu { height: 28px; background: #fff; display: grid; grid-template-columns: 48px 52px 59px 56px 77px 70px 75px 76px 92px 80px auto; padding-left: 11px; font: 16.400px/32px "Open Sans", sans-serif; color: #000; }
.toolrow { display: flex; height: 44px; margin-top: 2px; }
.bar { display: flex; align-items: center; padding: 0 1px 1px 0; margin-right: 5px; border-right: 1px solid #a8cbdf; background: linear-gradient(#e6f3fa, #d3e9f5 50%, #b9dbee 88%, #aed0e2); }
.grip { width: 3px; height: 42px; margin: 0 6px 0 2px; background: repeating-linear-gradient(#9fb5c2 0 2px, #fff 2px 4px, transparent 4px 5px); flex: none; }
.toolrow .grip { margin-right: 5.500px; }
.toolrow .bar { margin-bottom: 1px; }
.c { width: 41px; height: 39px; display: flex; align-items: center; justify-content: center; flex: none; }
.c svg, .s svg { width: 32px; height: 32px; }
.on { border: 1px solid #5f9cc2; background: linear-gradient(#b6d4e4, #e2f1f9); }
.sep { width: 2px; height: 35px; margin: 0 3px; background: linear-gradient(90deg, #999 50%, #fff 50%); flex: none; }
.toolrow .sep { margin-right: 3px; }
.combo { width: 146px; height: 28px; margin: 0 3px 0 1px; border: 1px solid #ddd; border-radius: 2px; background: #fcfdfe; display: flex; align-items: center; justify-content: space-between; padding: 0 8px 0 4px; font-size: 16px; color: #000; }
.dollar { font: bold 26px "Liberation Sans", sans-serif; text-anchor: middle; fill: #808000; }
.bin { font: bold 12px "Liberation Mono", monospace; fill: #2222d8; letter-spacing: 1px; }
.small { font-size: 9px; letter-spacing: 0; }
.q { font: bold 26px "Liberation Sans", sans-serif; text-anchor: middle; fill: #fff; }
.ga { font: bold 15px "Liberation Sans", sans-serif; fill: #777; }
.lbl { font: 15px "Liberation Sans", sans-serif; fill: #1818d8; }

.doctabs { height: 38px; padding-top: 4px; border-bottom: 1px solid #6b9fc2; display: flex; }
.doctab { position: relative; width: 247px; height: 35px; display: flex; align-items: center; padding: 0 16px 1px 28px; color: #1f4e78; font-size: 16px; }
.doctab > * { position: relative; }
.doctab .slant { position: absolute; left: 0; top: 0; }
.doctab b { margin: 0 auto 0 7px; }

.work-area { flex: 1; min-height: 0; display: flex; padding-top: 7px; border-right: 3px solid #a9cce0; background: linear-gradient(#bcdcef, #a9cce0 7px, #e2e9f1 7px); }
.side, .rot { background: linear-gradient(90deg, #eaf5fb, #d3e9f5 50%, #b9dbee 88%, #a9cce0); }
.side { width: 47px; overflow: hidden; padding-left: 1px; }
.side > * { flex: none; }
.s { width: 41px; height: 39px; display: flex; align-items: center; justify-content: center; }
.hgrip { display: block; height: 3px; margin: 3px 3px 4px 0; background: repeating-linear-gradient(90deg, #9fb5c2 0 2px, #fff 2px 4px, transparent 4px 5px); }
.hsep { display: block; width: 41px; height: 2px; margin: 1px 0 1px 3px; background: linear-gradient(#999 50%, #fff 50%); }
.hsep.two { margin: 1px 0 1px 3px; }
.side2 { width: 49px; background: #e2e9f1; }
.rot { height: 201px; padding-left: 3px; border-bottom: 1px solid #a8cbdf; }
.rot .hgrip { margin-bottom: 6px; }
.rot .hsep { margin: 4px 0 1px; }
.deg { width: 42px; height: 22px; margin: 1px 0 0 1px; background: #fff; font-size: 16px; line-height: 21px; }
.panel { width: 314px; display: flex; flex-direction: column; gap: 4px; background: #b4d4e6; }
.devices { width: 310px; flex: 1; border: 1px solid #666; background: #fff; }
.dhead { height: 33px; display: flex; align-items: center; padding-left: 4px; background: linear-gradient(#e6f3fa, #d3e9f5 50%, #a9cce0); font-size: 16px; }
.pl { width: 23px; height: 23px; margin-right: 9px; border-radius: 5px; background: #0448d8; color: #fff; font-size: 21px; line-height: 24px; text-align: center; }
.dt { margin-left: 82px; letter-spacing: .3px; }
ul { margin: 0; padding: 0; list-style: none; border-top: 1px solid #666; font-size: 16px; line-height: 20px; color: #000; }
li { height: 20px; padding: 1px 0 0 4px; }
.sel { background: #0078d7; color: #fff; }
.sheet { width: 1109px; height: 731px; border: 1px solid #666; flex: none; }
.t12 { font: 12.500px "Liberation Sans", sans-serif; fill: #111; }
.t8 { font: 8.500px "Liberation Sans", sans-serif; fill: #222; }
.blue { fill: #2020c8; }

.status { height: 46px; display: flex; color: #000; font-size: 16px; }
.sbar { display: flex; align-items: center; padding-top: 2px; border-right: 1px solid #a8cbdf; background: linear-gradient(#e6f3fa 2px, #d3e9f5 50%, #b9dbee 88%, #a9cce0); }
.sbar svg { margin-top: -1px; }
.sim { width: 378px; margin-right: 4px; }
.root { width: 412px; margin-right: 4px; }
.coords { flex: 1; }
.play { margin-left: 10px; }
.step { margin-left: 20px; }
.pause { margin-left: 25px; }
.stop { margin-left: 25px; }
.sim .sep { margin: 0 10px 0 14px; }
.nomsg { margin-left: 7px; color: #7d858b; }
.root .grip, .coords .grip { margin-left: 3px; margin-right: 7px; }
.coords .grip { margin-right: 8px; }
.cx { width: 42px; }
.vx { width: 59px; }
.cy { width: 38px; }
.th { margin-left: auto; margin-right: 2px; color: #000090; }

/* ---------- taskbar ---------- */
.taskbar { height: 71px; background: #cee6ec; display: flex; align-items: center; padding-left: 28px; font: 16.800px "Open Sans", sans-serif; color: #1c2326; }
.tk { height: 56px; width: 48px; display: flex; align-items: center; position: relative; flex: none; }
.start { width: 50px; }
.search { width: 47px; }
.app > span { overflow: hidden; margin-left: 9px; }
.gem { width: 175px; } .gem > span { width: 115px; }
.plan { width: 175px; } .plan > span { width: 112px; }
.fe { width: 133px; } .fe > span { width: 82px; margin-left: 8px; }
.vs { width: 176px; } .vs > span { width: 115px; margin-left: 10px; }
.wd { width: 167px; } .wd > span { width: 117px; font-size: 19px; }
.pr { width: 164px; padding-left: 7px; margin-right: 21px; } .pr > span { width: 116px; }
.wg { width: 181px; padding-left: 1px; } .wg > span { width: 115px; margin-left: 12px; }
.run::after { content: ""; position: absolute; left: 9px; bottom: 0; width: 6px; height: 5px; border-radius: 3px; background: #748589; }
.wg::after { left: 6px; }
.act { background: #e6f3f7; border-radius: 5px; box-shadow: 0 1px 1px #b6ccd4; }
.pr.act::after { left: 11px; width: 16px; background: #0078d7; }
.abox { width: 24px; height: 24px; background: #24989c; color: #fff; font: italic 22px/24px "Liberation Sans", sans-serif; text-align: center; }
.navy { background: #08213d; }
.w { font: bold 10px "Liberation Sans", sans-serif; fill: #fff; }
.tray { margin-left: auto; display: flex; align-items: center; padding-right: 28px; }
.eng { width: 35px; margin: 0 28px 0 27px; }
.vol { margin: 0 12px 0 10px; }
.clock { width: 116px; display: flex; flex-direction: column; align-items: flex-end; line-height: 24px; }
```
